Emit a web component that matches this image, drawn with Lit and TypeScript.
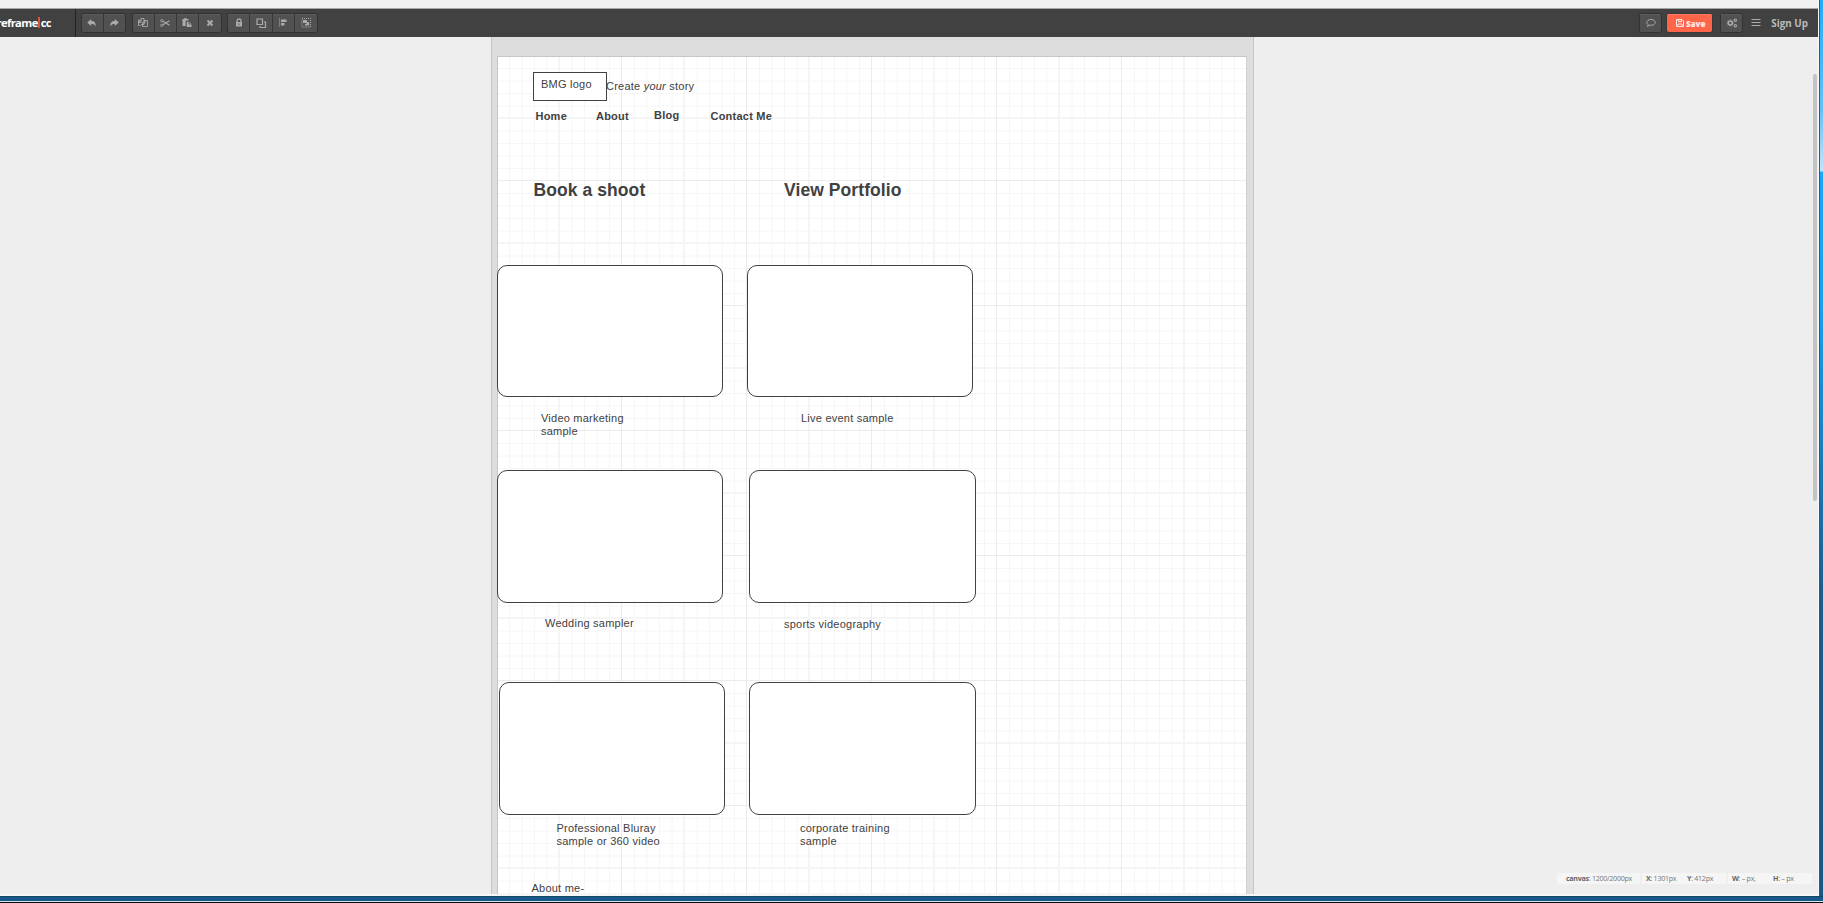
import { LitElement, html, css, svg } from "lit";
import { customElement } from "lit/decorators.js";

type Shape = { x: number; y: number; w: number; h: number };
type Label = { x: number; y: number; text: unknown; kind?: string };

const frames: Shape[] = [
  { x: 0, y: 209, w: 226, h: 132 },
  { x: 250, y: 209, w: 226, h: 132 },
  { x: 0, y: 414, w: 226, h: 133 },
  { x: 252, y: 414, w: 227, h: 133 },
  { x: 2, y: 626, w: 226, h: 133 },
  { x: 252, y: 626, w: 227, h: 133 },
];

const labels: Label[] = [
  { x: 44, y: 22, text: "BMG logo" },
  { x: 109, y: 24, text: html`Create <i>your</i> story` },
  { x: 38.5, y: 54, text: "Home", kind: "bold" },
  { x: 99, y: 54, text: "About", kind: "bold" },
  { x: 157, y: 53, text: "Blog", kind: "bold" },
  { x: 213.5, y: 54, text: "Contact Me", kind: "bold" },
  { x: 36.5, y: 124, text: "Book a shoot", kind: "heading" },
  { x: 287, y: 124, text: "View Portfolio", kind: "heading" },
  { x: 44, y: 356, text: html`Video marketing<br />sample` },
  { x: 304, y: 356, text: "Live event sample" },
  { x: 48, y: 561, text: "Wedding sampler" },
  { x: 287, y: 562, text: "sports videography" },
  { x: 59.5, y: 766, text: html`Professional Bluray<br />sample or 360 video` },
  { x: 303, y: 766, text: html`corporate training<br />sample` },
  { x: 34.5, y: 826, text: "About me-" },
];

const icons: Record<string, unknown> = {
  undo: svg`<path d="M5.2 2v2c3.300 0 4.800 1.900 4.300 5.500C8.700 7.600 7.500 7 5.200 7v2L1.200 5.500z" fill="currentColor"/>`,
  redo: svg`<path d="M6.800 2v2C3.500 4 2 5.900 2.500 9.500 3.300 7.600 4.500 7 6.800 7v2l4-3.500z" fill="currentColor"/>`,
  copy: svg`<path d="M4 3V1.500h3v6H4M3.500 3h-2v5.500h2M4 3l-2.500 2.500H4zM7 3.500h3.500v6H5.500V6L8 3.500V6H5.500" fill="none" stroke="currentColor" stroke-width=".9"/>`,
  cut: svg`<path d="M4 4.200l6.500 4M4 7.800l6.500-4" stroke="currentColor" stroke-width="1.100"/><circle cx="2.800" cy="3.700" r="1.200" fill="none" stroke="currentColor" stroke-width=".9"/><circle cx="2.800" cy="8.300" r="1.200" fill="none" stroke="currentColor" stroke-width=".9"/>`,
  paste: svg`<path d="M1.500 2H3V1.200h3V2h1.500v1.800H5V9H1.500z" fill="currentColor"/><path d="M5.500 4.500H8L10.500 7v3h-5z" fill="currentColor"/><path d="M5 10V4h3V7h2.500" stroke="#505050" fill="none" stroke-width=".8"/>`,
  remove: svg`<path d="M3.500 3.500l5 5M8.500 3.500l-5 5" stroke="currentColor" stroke-width="2"/>`,
  lock: svg`<path d="M4 5.500V4a2 2 0 014 0v1.500" fill="none" stroke="currentColor" stroke-width="1.300"/><path d="M3 5h6v4.500H3z" fill="currentColor"/><path d="M6 6.500V8" stroke="#505050"/>`,
  layers: svg`<path d="M2 2h5.500v5.500H2z" fill="none" stroke="currentColor" stroke-width="1.200"/><path d="M9 5h1.500v5.500H5V9" fill="none" stroke="currentColor" stroke-width="1.200"/>`,
  align: svg`<path d="M2.500 1.500V10" stroke="currentColor" stroke-dasharray="1 1"/><path d="M4 2.500h5.500v2.500H4zM4 6h3.500v2.500H4z" fill="currentColor"/>`,
  group: svg`<path d="M2 1.500h8.500V10H2z" fill="none" stroke="currentColor" stroke-dasharray="1 1"/><path d="M3 3h4v3H3zM6.500 5H9v3.500H5V7h1.500z" fill="currentColor"/>`,
  comment: svg`<path d="M6 2.500c2.500 0 4.200 1.200 4.200 2.900S8.500 8.300 6 8.300c-.6 0-1 0-1.500-.1L2.500 9.500l.6-1.900C2.200 7 1.800 6.300 1.800 5.400 1.800 3.700 3.500 2.500 6 2.500z" fill="none" stroke="currentColor"/>`,
  disk: svg`<path d="M2.500 2.500h5.500l1.500 1.500v5.500h-7zM4.500 2.500v2h3v-2M4 9.500V7h4v2.500" fill="none" stroke="currentColor"/>`,
  gears: svg`<circle cx="4.300" cy="6" r="2" fill="none" stroke="currentColor" stroke-width="1.600"/><path d="M4.300 2.600v1M4.300 8.400v1M.9 6h1M6.700 6h1M1.900 3.600l.8.8M1.900 8.400l.8-.8M6.700 3.600l-.8.8M6.700 8.400l-.8-.8" stroke="currentColor"/><circle cx="9.300" cy="3.200" r="1.200" fill="none" stroke="currentColor" stroke-width="1.100"/><circle cx="9.300" cy="8.700" r="1.200" fill="none" stroke="currentColor" stroke-width="1.100"/>`,
  menu: svg`<path d="M1.500 2.500h9M1.500 5.500h9M1.500 8.500h9" stroke="currentColor"/>`,
};

const icon = (name: string) => html`<svg class="icon" width="12" height="12" viewBox="0 0 12 12">${icons[name]}</svg>`;

@customElement("app-root")
export class AppRoot extends LitElement {
  static styles = css`
    :host {
      display: grid;
      grid-template: 896px 7px / 1819px 4px;
      width: 1823px;
      height: 903px;
      overflow: hidden;
      background: #eee;
      font-family: "Liberation Sans", Arial, sans-serif;
    }
    .app { display: flex; flex-direction: column; box-sizing: border-box; min-width: 0; min-height: 0; border-right: 1px solid #fafafa; overflow: hidden; position: relative; }
    .top { height: 8px; flex: none; background: #f0f0f0; border-bottom: 1px solid #a6a6a6; }
    .bar { height: 28px; flex: none; display: flex; align-items: stretch; background: #414141; color: #aaa; font-family: "Open Sans", sans-serif; }
    .brand { box-sizing: border-box; flex: none; width: 76px; display: flex; align-items: center; justify-content: flex-end; padding: 0 24px 1px 0; border-right: 1px solid #222; color: #fff; font-weight: 700; font-size: 11.200px; letter-spacing: -0.6px; white-space: nowrap; }
    .caret { flex: none; width: 1.500px; height: 11px; background: #d9533f; margin: 0 1px 0 0.500px; }
    .tools { display: flex; align-items: center; gap: 7.500px; padding-left: 6px; flex: 1; }
    .group { display: flex; border-radius: 2px; box-shadow: 0 0 0 1px #333; }
    .button { box-sizing: border-box; display: flex; align-items: center; justify-content: center; width: 22.100px; height: 18px; border-right: 1px solid #373737; background: #515151; box-shadow: inset 0 1px #5b5b5b; }
    .narrow .button { width: 21.500px; }
    .group .button:first-child { border-radius: 2px 0 0 2px; }
    .group .button:last-child { border-right: 0; border-radius: 0 2px 2px 0; }
    .icon { display: block; flex: none; }
    .account { display: flex; align-items: center; padding-right: 10px; }
    .solo .button { width: 21px; }
    .save { display: flex; align-items: center; justify-content: center; gap: 0; width: 45px; height: 18px; margin: 0 9px 0 6px; border-radius: 2px; background: #ff6549; box-shadow: 0 0 0 1px #393939, inset 0 1px #ff7d66; color: #ffe9e4; font-size: 8px; font-weight: 800; }
    .menu { display: flex; margin: 0 9px 0 8px; }
    .signup { font-size: 9.900px; font-weight: 700; color: #bbb; white-space: nowrap; }
    .workspace { flex: 1; min-height: 0; display: flex; justify-content: flex-start; padding-left: 491px; overflow: hidden; background: #eee; }
    .surround { box-sizing: border-box; width: 763px; padding: 19px 6px 0 5px; background: #ddd; border-left: 1px solid #c6c6c6; border-right: 1px solid #c6c6c6; }
    .canvas { position: relative; box-sizing: border-box; width: 750px; height: 1250px; background: #fff; border: 1px solid #c6c6c6; border-right-color: #d0d0d0; }
    .grid { display: block; width: 748px; height: 1248px; }
    .frame, .label, .logo { position: absolute; box-sizing: border-box; }
    .frame { border: 1px solid #414141; border-radius: 10px; background: #fff; }
    .logo { left: 35px; top: 15px; width: 74px; height: 29px; border: 1px solid #414141; background: #fff; }
    .label { color: #414141; font-size: 11px; line-height: 13px; letter-spacing: 0.230px; white-space: nowrap; }
    .bold { font-weight: 700; }
    .heading { font-size: 17.500px; line-height: 20px; font-weight: 700; letter-spacing: 0.080px; }
    .scroll { position: absolute; left: 1813px; top: 74px; width: 4px; height: 427px; border-radius: 2px; background: #c4c4c4; }
    .status { position: absolute; left: 1557px; top: 873px; display: flex; gap: 2px; font: 7.100px/11px "Open Sans", sans-serif; letter-spacing: -0.280px; color: #777; white-space: nowrap; }
    .cell { box-sizing: border-box; height: 11px; display: flex; background: #f5f5f5; }
    .size { width: 83px; padding-left: 9px; }
    .point { width: 84px; padding-left: 4px; }
    .dims { width: 84px; padding-left: 4px; }
    .point .pair:first-child, .dims .pair:first-child { width: 41px; }
    .pair b { color: #666; }
    .foot { height: 2px; position: absolute; left: 0; right: 0; bottom: 0; background: #f6f6f6; }
    .right { background: linear-gradient(#25abf7 0, #42b5f8 55px, #62c1f9 110px, #c2e5fb 171px, #1ba6f5 172px, #1ba0ee 300px, #1c5b8c 600px, #195784); border-left: 1px solid #245c85; box-sizing: border-box; }
    .bottom { grid-column: 1 / 3; box-sizing: border-box; border-top: 1px solid #174465; border-bottom: 1px solid #020810; background: linear-gradient(#19598a 0 4px, #dce8ef 4px); }
  `;

  private group(names: string[], kind = "") {
    return html`<div class="group ${kind}">${names.map((n) => html`<div class="button">${icon(n)}</div>`)}</div>`;
  }

  private gridLines() {
    const at = [12, 24.5, 37, 49.5, 74.5, 87, 99.5, 112];
    return html`<svg class="grid">
      <defs>
        <pattern id="rule" width="125" height="125" patternUnits="userSpaceOnUse" x="-1" y="-1">
          ${at.map((p) => svg`<path d="M${p + 0.5} 0V125M0 ${p + 0.5}H125" stroke="#f6f6f6" stroke-width="1"/>`)}
          <path d="M62 0V125M0 62H125" stroke="#f5f5f5" stroke-width="2" />
          <path d="M124.500 0V125M0 124.500H125" stroke="#ebebeb" />
        </pattern>
      </defs>
      <rect width="748" height="1248" fill="url(#rule)" />
    </svg>`;
  }

  render() {
    return html`
      <div class="app">
        <div class="top"></div>
        <header class="bar">
          <div class="brand">reframe<span class="caret"></span>cc</div>
          <div class="tools">
            ${this.group(["undo", "redo"], "narrow")} ${this.group(["copy", "cut", "paste", "remove"])}
            ${this.group(["lock", "layers", "align", "group"])}
          </div>
          <div class="account">
            ${this.group(["comment"], "solo")}
            <div class="save">${icon("disk")}Save</div>
            ${this.group(["gears"], "solo")}
            <div class="menu">${icon("menu")}</div>
            <span class="signup">Sign Up</span>
          </div>
        </header>
        <main class="workspace">
          <div class="surround">
            <div class="canvas">
              ${this.gridLines()}
              <div class="logo"></div>
              ${frames.map((f) => html`<div class="frame" style="left:${f.x - 1}px;top:${f.y - 1}px;width:${f.w}px;height:${f.h}px"></div>`)}
              ${labels.map((l) => html`<div class="label ${l.kind ?? ""}" style="left:${l.x - 1}px;top:${l.y - 1}px">${l.text}</div>`)}
            </div>
          </div>
        </main>
        <div class="scroll"></div>
        <div class="status">
          <div class="cell size"><span class="pair"><b>canvas</b>: 1200/2000px</span></div>
          <div class="cell point"><span class="pair"><b>X</b>: 1301px</span><span class="pair"><b>Y</b>: 412px</span></div>
          <div class="cell dims"><span class="pair"><b>W</b>: – px,</span><span class="pair"><b>H</b>: – px</span></div>
        </div>
        <div class="foot"></div>
      </div>
      <div class="right"></div>
      <div class="bottom"></div>
    `;
  }
}
